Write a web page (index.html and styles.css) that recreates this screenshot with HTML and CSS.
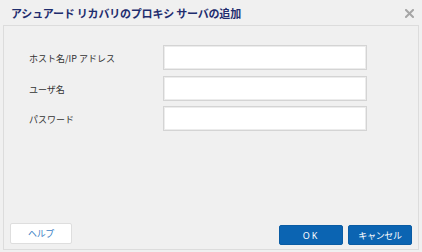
FILE: index.html
```html
<!DOCTYPE html>
<html lang="ja">
<head>
<meta charset="utf-8">
<link rel="stylesheet" href="styles.css">
</head>
<body>
<div class="dialog">
  <div class="titlebar">
    <span class="title">アシュアード リカバリのプロキシ サーバの追加</span>
    <span class="close">
      <svg width="9" height="9" viewBox="0 0 9 9"><path d="M1 1 L8 8 M8 1 L1 8" stroke="#a6a6a6" stroke-width="2" stroke-linecap="square"/></svg>
    </span>
  </div>
  <div class="panel">
    <div class="form">
      <div class="row"><label class="label">ホスト名/IP アドレス</label><input class="field" type="text"></div>
      <div class="row"><label class="label">ユーザ名</label><input class="field" type="text"></div>
      <div class="row"><label class="label">パスワード</label><input class="field" type="password"></div>
    </div>
    <div class="footer">
      <button class="btn btn-help">ヘルプ</button>
      <div class="actions">
        <button class="btn btn-primary btn-ok">OK</button>
        <button class="btn btn-primary">キャンセル</button>
      </div>
    </div>
  </div>
</div>
</body>
</html>
```

FILE: styles.css
```css
html, body {
  margin: 0;
  padding: 0;
  background: #f0f0f0;
}
body {
  width: 422px;
  height: 252px;
  overflow: hidden;
  font-family: "Noto Sans CJK JP", "Noto Sans", sans-serif;
}
.dialog {
  box-sizing: border-box;
  width: 422px;
  height: 252px;
  padding: 0 3px 2px 3px;
  display: flex;
  flex-direction: column;
}
.titlebar {
  height: 25px;
  flex: none;
  display: flex;
  align-items: center;
  justify-content: space-between;
  padding: 0 5px 0 8px;
}
.title {
  font-size: 11px;
  font-weight: bold;
  color: #1f2d6e;
  letter-spacing: -0.2px;
}
.close {
  display: flex;
  width: 9px;
  height: 9px;
  margin-top: 1px;
}
.panel {
  flex: 1;
  border: 1px solid #dcdcdc;
  background: #f0f0f0;
  display: flex;
  flex-direction: column;
  justify-content: space-between;
  padding: 19px 6px 4px 6px;
}
.form {
  display: flex;
  flex-direction: column;
  gap: 5.5px;
  padding-left: 19px;
}
.row {
  display: flex;
  align-items: center;
}
.label {
  width: 134px;
  font-size: 9px;
  color: #333333;
  padding-top: 2px;
}
.field {
  box-sizing: border-box;
  width: 204px;
  height: 25px;
  margin: 0;
  border: 1px solid #d4d4d4;
  box-shadow: inset 0 0 0 1px #ececec;
  background: #ffffff;
  outline: none;
}
.footer {
  display: flex;
  justify-content: space-between;
  align-items: flex-end;
}
.actions {
  display: flex;
  gap: 5px;
}
.btn {
  box-sizing: border-box;
  margin: 0;
  font-family: "Noto Sans CJK JP", "Noto Sans", sans-serif;
  font-size: 9px;
  letter-spacing: -0.3px;
  border-radius: 2px;
  padding: 0;
  display: flex;
  align-items: center;
  justify-content: center;
}
.btn-help {
  width: 62px;
  height: 21px;
  background: #ffffff;
  border: 1px solid #dedede;
  color: #3d7fc4;
  margin-bottom: 1px;
}
.btn-primary {
  width: 64px;
  height: 20px;
  background: #0b64b2;
  border: 1px solid #0a5ca4;
  color: #ffffff;
}
.btn-ok {
  letter-spacing: 2px;
  font-family: "Noto Sans", sans-serif;
}
```
